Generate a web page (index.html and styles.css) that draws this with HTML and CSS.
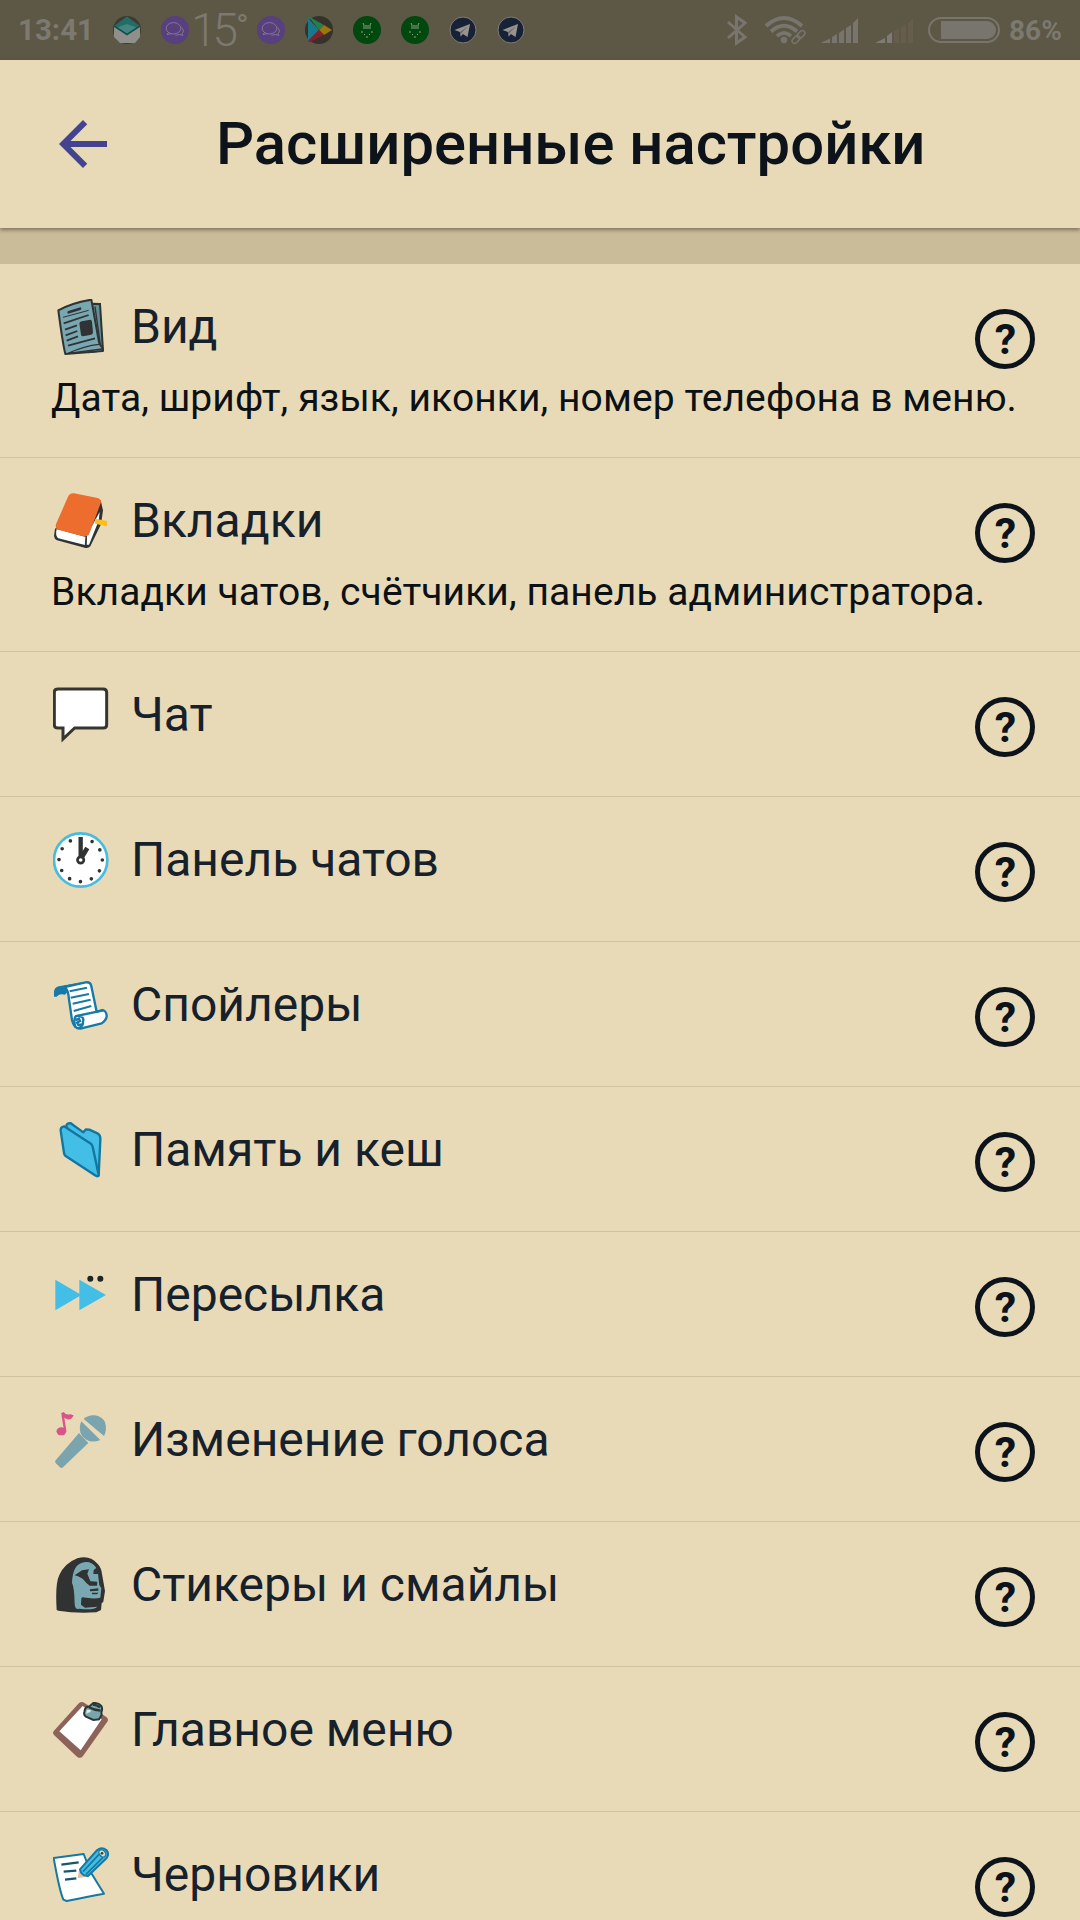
FILE: index.html
```html
<!DOCTYPE html>
<html lang="ru">
<head>
    <meta charset="utf-8">
    <title>Расширенные настройки</title>
    <link rel="stylesheet" href="styles.css">
</head>
<body>
    <div class="status-bar">
        <div class="time">13:41</div>
        <div class="notifications">
            <svg class="notice" viewBox="0 0 48 60">
                <circle cx="24" cy="30" r="14" fill="#3c3b30"/>
                <path d="M11 27L24 17L37 27V37L32 43H17L11 37Z" fill="#908f8b"/>
                <path d="M11 26L24 16.500L37 26L24 34Z" fill="#246c68"/>
                <path d="M13 28L24 24L35 28L24 34Z" fill="#438681"/>
                <path d="M11 26L24 34.500L37 26" fill="none" stroke="#15514c" stroke-width="1.500"/>
            </svg>
            <svg class="notice" viewBox="0 0 48 60">
                <circle cx="24" cy="30" r="14" fill="#583f7e"/>
                <g fill="none" stroke="#8e829b" stroke-width=".8">
                    <ellipse cx="22.500" cy="28.300" rx="7.300" ry="5.700"/>
                    <path d="M17.500 32.500L16 34.500L20 33.700M30.500 27.500Q34 31 31 33.500L32 35.300L28.500 34.500L24.500 35.300"/>
                </g>
            </svg>
            <div class="degrees">15<span class="sign">°</span></div>
            <svg class="notice" viewBox="0 0 48 60">
                <circle cx="24" cy="30" r="14" fill="#583f7e"/>
                <g fill="none" stroke="#8e829b" stroke-width=".8">
                    <ellipse cx="22.500" cy="28.300" rx="7.300" ry="5.700"/>
                    <path d="M17.500 32.500L16 34.500L20 33.700M30.500 27.500Q34 31 31 33.500L32 35.300L28.500 34.500L24.500 35.300"/>
                </g>
            </svg>
            <svg class="notice" viewBox="0 0 48 60">
                <circle cx="24" cy="30" r="14" fill="#36312a"/>
                <path d="M13 18L24 30L13 41Z" fill="#17798a"/>
                <path d="M13 16L29 25L24 30Z" fill="#247f4c"/>
                <path d="M29 25L37 30L29 35L24 30Z" fill="#9a760d"/>
                <path d="M24 30L29 35L15 42L13 41Z" fill="#841f2c"/>
            </svg>
            <svg class="notice" viewBox="0 0 48 60">
                <circle cx="24" cy="30" r="14" fill="#00480d"/>
                <path d="M20 23L21 25M28 23L27 25M20 26H28M20 28H28M19 31V33M29 31V33M21 34L22 35M27 34L26 35M24 36V38" fill="none" stroke="#89a084" stroke-width="1"/>
            </svg>
            <svg class="notice" viewBox="0 0 48 60">
                <circle cx="24" cy="30" r="14" fill="#00480d"/>
                <path d="M20 23L21 25M28 23L27 25M20 26H28M20 28H28M19 31V33M29 31V33M21 34L22 35M27 34L26 35M24 36V38" fill="none" stroke="#89a084" stroke-width="1"/>
            </svg>
            <svg class="notice" viewBox="0 0 48 60">
                <circle cx="24" cy="30" r="13" fill="#182236" stroke="#807e73" stroke-width="1"/>
                <path d="M15.500 30L31 24L28.500 37L24 34L21.500 36.500L21 32Z" fill="#96948d"/>
                <path d="M21 32L29 26L22.500 33L21.500 36.500Z" fill="#666b70"/>
            </svg>
            <svg class="notice" viewBox="0 0 48 60">
                <circle cx="24" cy="30" r="13" fill="#182236" stroke="#807e73" stroke-width="1"/>
                <path d="M15.500 30L31 24L28.500 37L24 34L21.500 36.500L21 32Z" fill="#96948d"/>
                <path d="M21 32L29 26L22.500 33L21.500 36.500Z" fill="#666b70"/>
            </svg>
        </div>
        <div class="system">
            <svg class="signals" viewBox="720 0 284 60">
                <!-- bluetooth -->
                <path d="M728 22L745 37L736.500 43V17L745 23L728 38" fill="none" stroke="#77756e" stroke-width="3"/>
                <!-- wifi -->
                <g fill="none" stroke="#77756e" stroke-width="4">
                    <path d="M766 26Q784 10 802 26"/>
                    <path d="M771 31.500Q784 20 797 31.500"/>
                    <path d="M777 36Q784 30 791 36"/>
                </g>
                <circle cx="784" cy="40" r="3.200" fill="#77756e"/>
                <g fill="none" stroke="#77756e" stroke-width="1.500">
                    <rect x="-4.500" y="-2.500" width="9" height="5" rx="2.500" transform="translate(801 34.500) rotate(-45)"/>
                    <rect x="-4.500" y="-2.500" width="9" height="5" rx="2.500" transform="translate(796 39.500) rotate(-45)"/>
                </g>
                <!-- signal bars -->
                <path d="M820.500 43L830 38.500V43ZM832 37L837 34V43H832ZM839 33L844 29.500V43H839ZM846 28L851 25V43H846ZM853 23L858 18V43H853Z" fill="#77756e"/>
                <path d="M875 43L885 38V43ZM887 36L892 32V43H887Z" fill="#7d7b74"/>
                <path d="M894 31L899 28V43H894ZM901 27L906 24V43H901ZM908 23L913 18V43H908Z" fill="#665d4c"/>
                <!-- battery -->
                <rect x="929" y="18" width="70" height="24" rx="12" fill="none" stroke="#77756e" stroke-width="2"/>
                <path d="M941 21H987A9 9 0 0 1 987 39H941Z" fill="#77756e"/>
            </svg>
            <div class="percent">86%</div>
        </div>
    </div>

    <div class="header">
        <svg class="back" viewBox="0 0 24 24"><path d="M20 11H7.830l5.590-5.590L12 4l-8 8 8 8 1.410-1.410L7.830 13H20v-2z"/></svg>
        <h1 class="title">Расширенные настройки</h1>
    </div>
    <div class="band"></div>

    <div class="list">
        <div class="row tall">
            <div class="content">
                <div class="name">
                    <svg class="icon" viewBox="69 57 168 168">
                        <path d="M184 71L210 72L219 211L179 216Z" fill="#628f98" stroke="#2f3333" stroke-width="6"/>
                        <path d="M85 91Q127 68 184 59L207 187Q213 200 217 202L218 213L106 222Q98 190 85 91Z" fill="#79a7b1" stroke="#2f3333" stroke-width="6" stroke-linejoin="round"/>
                        <path d="M195 80L211 194M207 193Q164 197 114 220L216 207" fill="none" stroke="#2f3333" stroke-width="4"/>
                        <path d="M116 97L150 86" fill="none" stroke="#2f3333" stroke-width="8" stroke-linecap="round"/>
                        <path d="M99 112L176 91" stroke="#2f3333" stroke-width="3"/>
                        <path d="M101 130L176 105M105 149L141 136M107 166L142 153M110 182L144 169M114 197L195 175" fill="none" stroke="#2f3333" stroke-width="5.500"/>
                        <path d="M148 130Q149 125 155 124L181 119Q185 119 186 125L189 157Q189 162 184 164L159 169Q154 169 153 164Z" fill="#2f3333"/>
                    </svg>
                    <span>Вид</span>
                </div>
                <div class="note">Дата, шрифт, язык, иконки, номер телефона в меню.</div>
            </div>
            <div class="help">?</div>
        </div>
        <div class="row tall">
            <div class="content">
                <div class="name">
                    <svg class="icon" viewBox="69 639 168 168">
                        <path d="M75 746L72 768Q73 777 81 781L164 803Q174 807 181 799L213 733L219 691L212 661Z" fill="#303332"/>
                        <path d="M80 747L168 771L165 795L85 775Q75 767 80 747Z" fill="#fff"/>
                        <path d="M171 766L209 696L206 722L177 794H170Z" fill="#fff"/>
                        <path d="M169 767L166 798" stroke="#303332" stroke-width="4"/>
                        <path d="M78 733L114 650Q119 639 132 640L199 653Q215 656 213 667L178 761Q173 771 159 769L91 751Q74 750 78 733Z" fill="#ec6d2e"/>
                        <path d="M196 716L232 723L230 739L195 731Z" fill="#fbbd20"/>
                    </svg>
                    <span>Вкладки</span>
                </div>
                <div class="note">Вкладки чатов, счётчики, панель администратора.</div>
            </div>
            <div class="help">?</div>
        </div>
        <div class="row">
            <div class="content">
                <div class="name">
                    <svg class="icon" viewBox="69 81 168 168">
                        <path d="M84 87H219Q230 87 230 97V194Q230 204 219 204H134L99 237V204H84Q73 204 73 194V97Q73 87 84 87Z" fill="#fff" stroke="#363631" stroke-width="9"/>
                    </svg>
                    <span>Чат</span>
                </div>
            </div>
            <div class="help">?</div>
        </div>
        <div class="row">
            <div class="content">
                <div class="name">
                    <svg class="icon" viewBox="69 516 168 168">
                        <circle cx="152" cy="600" r="80" fill="#fff" stroke="#47bbe0" stroke-width="8"/>
                        <circle cx="152" cy="600" r="65" fill="none" stroke="#303332" stroke-width="11" stroke-linecap="round" stroke-dasharray="0 34.034"/>
                        <path d="M152 528V594" stroke="#fff" stroke-width="22"/>
                        <path d="M152 531V591" stroke="#303332" stroke-width="13"/>
                        <path d="M155 592L172 564" stroke="#303332" stroke-width="14"/>
                        <circle cx="152" cy="600" r="9.500" fill="#fff" stroke="#303332" stroke-width="8"/>
                    </svg>
                    <span>Панель чатов</span>
                </div>
            </div>
            <div class="help">?</div>
        </div>
        <div class="row">
            <div class="content">
                <div class="name">
                    <svg class="icon" viewBox="69 51 168 168">
                        <path d="M72 110V94Q74 82 86 79L166 65L118 89L105 104Q88 100 80 110Z" fill="#1679a7"/>
                        <path d="M103 81L167 67Q182 65 184 79L200 155L218 150Q230 154 230 169Q229 180 215 190L151 206Q132 207 126 180L117 118Q115 88 103 81Z" fill="#fff" stroke="#1679a7" stroke-width="7" stroke-linejoin="round"/>
                        <path d="M119 94L171 83M122 113L177 102M128 131L182 119M131 153L184 138" stroke="#1679a7" stroke-width="6"/>
                        <path d="M137 202Q128 180 138 168L220 151M143 169Q164 168 159 185Q160 199 145 204" fill="none" stroke="#1679a7" stroke-width="7"/>
                        <path d="M136 180L147 177L150 183L141 188L145 195L158 193" fill="none" stroke="#1679a7" stroke-width="7"/>
                    </svg>
                    <span>Спойлеры</span>
                </div>
            </div>
            <div class="help">?</div>
        </div>
        <div class="row">
            <div class="content">
                <div class="name">
                    <svg class="icon" viewBox="69 486 168 168">
                        <g fill="#43bee7" stroke="#13769f" stroke-width="7" stroke-linejoin="round">
                            <path d="M109 500Q108 490 121 489L160 517L168 508L178 509L204 521Q212 526 211 539L206 647L192 641Z"/>
                            <path d="M92 512Q91 501 102 499L178 548Q185 551 188 560L206 645Q204 652 195 646L108 589Q103 586 102 579Z"/>
                        </g>
                    </svg>
                    <span>Память и кеш</span>
                </div>
            </div>
            <div class="help">?</div>
        </div>
        <div class="row">
            <div class="content">
                <div class="name">
                    <svg class="icon" viewBox="69 21 168 168">
                        <path d="M76 59L148 101V59L228 105L148 151V109L76 151Z" fill="#43bee7"/>
                        <circle cx="181" cy="56" r="9" fill="#202427"/>
                        <circle cx="211" cy="56" r="9" fill="#202427"/>
                    </svg>
                    <span>Пересылка</span>
                </div>
            </div>
            <div class="help">?</div>
        </div>
        <div class="row">
            <div class="content">
                <div class="name">
                    <svg class="icon" viewBox="69 456 168 168">
                        <path d="M147 519L175 549L99 622Q94 626 89 621L77 609Q74 605 77 601Z" fill="#7aa4ae"/>
                        <path d="M154 484Q147 500 151 517Q155 530 169 539Q187 550 211 540Z" fill="#7aa4ae"/>
                        <path d="M161 477Q176 464 194 466Q216 469 225 487Q232 509 222 528Z" fill="#7aa4ae"/>
                        <ellipse cx="94" cy="514" rx="14.500" ry="12" fill="#d95488"/>
                        <path d="M106 514L98 465" stroke="#d95488" stroke-width="7"/>
                        <path d="M93 460L101 456Q107 466 121 463L131 466Q124 481 112 478L99 472Z" fill="#d95488"/>
                    </svg>
                    <span>Изменение голоса</span>
                </div>
            </div>
            <div class="help">?</div>
        </div>
        <div class="row">
            <div class="content">
                <div class="name">
                    <svg class="icon" viewBox="69 21 168 168">
                        <path d="M80 180Q75 101 88 75Q104 40 142 25Q180 13 204 43Q214 54 216 72L225 123L220 155L215 160L213 180L199 187Q136 191 85 182Z" fill="#303332"/>
                        <path d="M147 176Q135 180 134 161Q133 113 126 98Q128 46 156 38Q184 31 199 54L191 60L190 72L204 72L208 105L214 115L211 143Q194 148 157 142L154 145L153 164L165 173L202 170Q190 182 147 176Z" fill="#7aa8b2"/>
                        <path d="M134 76L156 61L177 58L172 71L181 94L202 95L201 107L179 107Q169 100 158 86L144 79ZM180 118L205 115L205 122L180 124ZM186 128H206L201 133H186Z" fill="#303332"/>
                    </svg>
                    <span>Стикеры и смайлы</span>
                </div>
            </div>
            <div class="help">?</div>
        </div>
        <div class="row">
            <div class="content">
                <div class="name">
                    <svg class="icon" viewBox="69 456 168 168">
                        <path d="M145 461Q151 454 160 457L229 501Q237 507 232 515L159 618Q151 628 141 620L72 555Q66 548 72 542Z" fill="#8d6258"/>
                        <path d="M158 468L215 508L152 601L88 544Z" fill="#fff"/>
                        <path d="M165 477Q168 469 177 470L190 459Q206 458 213 467Q219 475 214 487L215 495L207 508L190 510L168 500Q160 495 163 486Z" fill="#79a6ad" stroke="#2c3532" stroke-width="6"/>
                        <path d="M177 472Q192 481 212 482M189 464Q201 465 210 472" fill="none" stroke="#2c3532" stroke-width="7"/>
                        <path d="M170 481Q176 477 184 482L178 488Q174 486 169 492Z" fill="#d4eced"/>
                    </svg>
                    <span>Главное меню</span>
                </div>
            </div>
            <div class="help">?</div>
        </div>
        <div class="row">
            <div class="content">
                <div class="name">
                    <svg class="icon" viewBox="69 141 168 168">
                        <path d="M71 174L161 162Q171 190 185 221L222 281Q174 290 110 303L100 299Q88 270 71 174Z" fill="#fff" stroke="#1679a2" stroke-width="6" stroke-linejoin="round"/>
                        <path d="M94 194L146 187M101 215L139 212M105 239L139 235" stroke="#16576d" stroke-width="7"/>
                        <path d="M147 209L143 235L167 231Z" fill="#edbd99"/>
                        <path d="M150 208L201 151Q215 139 229 150Q239 162 230 174L174 228Q154 228 150 208Z" fill="#43bee7" stroke="#1679a2" stroke-width="6"/>
                        <path d="M159 215L207 163M168 223L219 172" stroke="#1679a2" stroke-width="5"/>
                        <ellipse cx="217" cy="160" rx="9" ry="12" transform="rotate(-40 217 160)" fill="#e4d8bd" stroke="#1679a2" stroke-width="4"/>
                        <circle cx="216" cy="160" r="4" fill="#29454f"/>
                    </svg>
                    <span>Черновики</span>
                </div>
            </div>
            <div class="help">?</div>
        </div>
    </div>
</body>
</html>
```

FILE: styles.css
```css
* {
    box-sizing: border-box;
}
body {
    margin: 0;
    width: 1080px;
    height: 1920px;
    overflow: hidden;
    background-color: #e8dab7;
    font-family: Roboto, "Noto Sans", sans-serif;
}
svg {
    display: block;
    flex-shrink: 0;
}

/* Status bar */
.status-bar {
    display: flex;
    height: 60px;
    padding-left: 18px;
    background-color: #5d5745;
    color: #7b7970;
    font-weight: bold;
    line-height: 61px;
}
.time {
    width: 85px;
    font-size: 29.5px;
}
.notifications {
    display: flex;
}
.notice {
    width: 48px;
    height: 60px;
}
.degrees {
    display: flex;
    width: 48px;
    text-indent: -8px;
    font-size: 46px;
    font-weight: 300;
    letter-spacing: -4px;
    line-height: 60px;
    white-space: nowrap;
}
.sign {
    margin-left: 2px;
    text-indent: 0;
    font-size: 34px;
    font-weight: 400;
    line-height: 52px;
}
.system {
    display: flex;
    margin-left: auto;
    padding-right: 17px;
}
.signals {
    width: 284px;
    height: 60px;
}
.percent {
    width: 54px;
    margin-left: 5px;
    font-size: 28px;
}

/* Header */
.header {
    position: relative; /* shadow falls over the band */
    display: flex;
    align-items: center;
    height: 168px;
    padding-left: 47px;
    background-color: #e8dab7;
    box-shadow: 0 2px 4px rgba(0, 0, 0, 0.4);
}
.back {
    width: 72px;
    height: 72px;
    fill: #444390;
}
.title {
    margin: 0 0 0 97px;
    color: #0c131b;
    font-size: 59.8px;
    font-weight: 500;
    line-height: 70px;
    white-space: nowrap;
}
.band {
    height: 36px;
    background-color: #cbbc99;
}

/* Settings list */
.row {
    display: flex;
    justify-content: space-between;
    height: 145px;
    padding: 35px 45px 0 51px;
    border-bottom: 1px solid #cfc3a2;
}
.row.tall {
    height: 194px;
}
.name {
    display: flex;
    color: #17212b;
    font-size: 48px;
    line-height: 56px;
}
.icon {
    width: 56px;
    height: 56px;
    margin: 0 22px 0 2px;
}
.note {
    margin-top: 15px;
    width: 0;
    color: #0c1116;
    font-size: 39px;
    letter-spacing: 0.08px;
    line-height: 56px;
    white-space: nowrap;
}
.help {
    width: 60px;
    height: 60px;
    margin-top: 10px;
    flex-shrink: 0;
    border: 5px solid #0c131b;
    border-radius: 50%;
    color: #0c131b;
    font-size: 43px;
    font-weight: bold;
    line-height: 50px;
    text-align: center;
    text-indent: 1px;
}
```
